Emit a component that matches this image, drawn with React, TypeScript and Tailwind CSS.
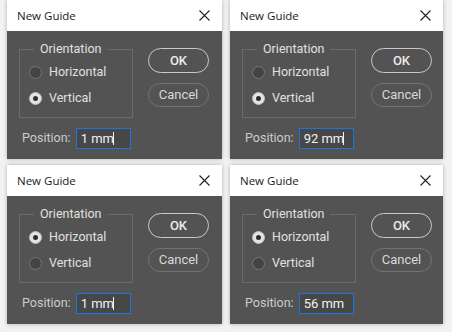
import React from 'react'

type GuideProps = {
  horizontal: boolean
  value: string
  caret: boolean
}

function Radio({ checked, label }: { checked: boolean; label: string }) {
  return (
    <div className="flex h-[18px] items-center">
      {checked ? (
        <span className="flex h-[13px] w-[13px] items-center justify-center rounded-full border border-[#bdbdbd] bg-[#e4e4e4]">
          <span className="h-[5px] w-[5px] rounded-full bg-[#2e2e2e]" />
        </span>
      ) : (
        <span className="h-[13px] w-[13px] rounded-full border border-[#767676] bg-[#444444]" />
      )}
      <span className="ml-[7px] text-[12.5px] leading-[18px] text-[#e0e0e0]">{label}</span>
    </div>
  )
}

function NewGuide({ horizontal, value, caret }: GuideProps) {
  return (
    <div className="flex h-[159px] flex-col shadow-[0_0_4px_rgba(0,0,0,0.28)]">
      {/* title bar */}
      <div className="flex h-[31px] items-center justify-between bg-white pl-[10px] pr-[12px]">
        <span className="font-['Open_Sans',sans-serif] text-[11.5px] text-[#1a1a1a]">New Guide</span>
        <svg width="11" height="11" viewBox="0 0 11 11" className="text-[#222]">
          <path d="M0.5 0.5 L10.5 10.5 M10.5 0.5 L0.5 10.5" stroke="currentColor" strokeWidth="1.1" />
        </svg>
      </div>

      {/* body */}
      <div className="flex flex-1 flex-col bg-[#535353] font-['Roboto',sans-serif]">
        <div className="flex pt-[9px]">
          <fieldset className="ml-[12px] h-[78px] w-[114px] border border-[#6a6a6a] pl-[9px]">
            <legend className="ml-[5px] px-[6px] text-[12.5px] leading-[18px] text-[#e0e0e0]">Orientation</legend>
            <div className="mt-[5px] flex flex-col gap-[8px]">
              <Radio checked={horizontal} label="Horizontal" />
              <Radio checked={!horizontal} label="Vertical" />
            </div>
          </fieldset>

          <div className="ml-[15px] mt-[8px] flex flex-col gap-[10px]">
            <div className="flex h-[25px] w-[61px] items-center justify-center rounded-full border-[1.5px] border-[#c9c9c9] text-[13px] font-medium text-[#ececec]">
              OK
            </div>
            <div className="flex h-[24px] w-[61px] items-center justify-center rounded-full border border-[#737373] text-[13px] text-[#d8d8d8]">
              Cancel
            </div>
          </div>
        </div>

        <div className="ml-[15px] mt-[10px] flex items-center">
          <span className="text-[12.5px] text-[#cccccc]">Position:</span>
          <div className="ml-[5px] flex h-[21px] w-[55px] items-center border-[1.5px] border-[#1f74e0] bg-[#474747] pl-[4px] text-[13px] text-[#f2f2f2]">
            <span>{value}</span>
            {caret && <span className="-ml-[1px] h-[13px] w-px bg-[#f2f2f2]" />}
          </div>
        </div>
      </div>
    </div>
  )
}

export default function App() {
  return (
    <div className="h-[332px] w-[452px] overflow-hidden bg-[#f2f2f2]">
      <div className="grid grid-cols-[215px_213px] gap-x-[8px] gap-y-[6px] pl-[7px]">
        <NewGuide horizontal={false} value="1 mm" caret />
        <NewGuide horizontal={false} value="92 mm" caret />
        <NewGuide horizontal value="1 mm" caret />
        <NewGuide horizontal value="56 mm" caret={false} />
      </div>
    </div>
  )
}
